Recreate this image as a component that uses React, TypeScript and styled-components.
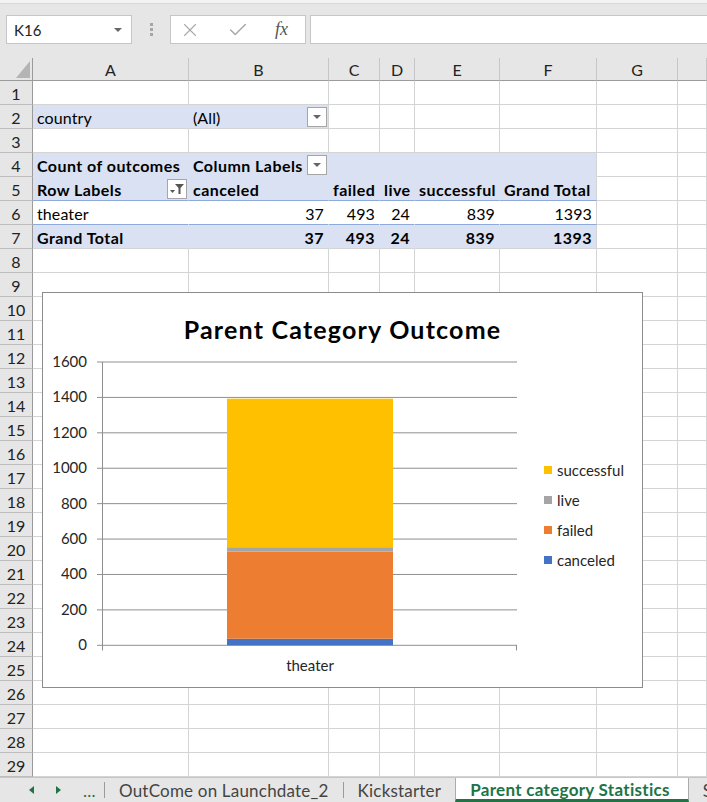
import React from 'react';
import styled, { createGlobalStyle } from 'styled-components';
import { X, Check } from 'lucide-react';

const FONT = `Lato, 'Liberation Sans', sans-serif`;

type Align = 'left' | 'right';
type Line = 'grid' | 'blue' | 'fill';
type Btn = 'drop' | 'filter';

type CellSpec = {
  text?: string;
  align?: Align;
  bold?: boolean;
  fill?: boolean;
  line?: Line;
  vline?: boolean;
  button?: Btn;
};

const columns = [
  { name: 'A', width: 156 },
  { name: 'B', width: 140 },
  { name: 'C', width: 51 },
  { name: 'D', width: 35 },
  { name: 'E', width: 85 },
  { name: 'F', width: 97 },
  { name: 'G', width: 81 },
  { name: 'H', width: 0 },
];

const ROWS = 29;

const lineColors: Record<Line, string> = {
  grid: '#d4d4d4',
  blue: '#8ea9db',
  fill: '#d9e1f2',
};

const values = ['37', '493', '24', '839', '1393'];
const headers = ['canceled', 'failed', 'live', 'successful', 'Grand Total'];

const pivot: Record<number, CellSpec[]> = {
  2: [
    { text: 'country', fill: true, vline: false },
    { text: '(All)', fill: true, button: 'drop' },
  ],
  4: [
    { text: 'Count of outcomes', bold: true, fill: true, line: 'fill', vline: false },
    { text: 'Column Labels', bold: true, fill: true, line: 'fill', vline: false, button: 'drop' },
    { fill: true, line: 'fill', vline: false },
    { fill: true, line: 'fill', vline: false },
    { fill: true, line: 'fill', vline: false },
    { fill: true, line: 'fill' },
  ],
  5: [
    { text: 'Row Labels', bold: true, fill: true, line: 'blue', vline: false, button: 'filter' },
    ...headers.map((h, i): CellSpec => ({ text: h, bold: true, fill: true, line: 'blue', vline: i === 4 })),
  ],
  6: [
    { text: 'theater', line: 'blue', vline: false },
    ...values.map((v, i): CellSpec => ({ text: v, align: 'right', line: 'blue', vline: i === 4 })),
  ],
  7: [
    { text: 'Grand Total', bold: true, fill: true, vline: false },
    ...values.map((v, i): CellSpec => ({ text: v, align: 'right', bold: true, fill: true, vline: i === 4 })),
  ],
};

const series = [
  { name: 'canceled', value: 37, color: '#4472c4' },
  { name: 'failed', value: 493, color: '#ed7d31' },
  { name: 'live', value: 24, color: '#a5a5a5' },
  { name: 'successful', value: 839, color: '#ffc000' },
];

const axisTicks = [0, 200, 400, 600, 800, 1000, 1200, 1400, 1600];
const yOf = (v: number) => 301.3 - (v * 283.3) / 1600;

const GlobalStyle = createGlobalStyle`
  html, body {
    margin: 0;
    padding: 0;
    background: #fff;
  }
  body {
    width: 707px;
    height: 802px;
    overflow: hidden;
    font-family: ${FONT};
  }
  * {
    box-sizing: border-box;
  }
`;

const Window = styled.div`
  display: flex;
  flex-direction: column;
  width: 707px;
  height: 802px;
  overflow: hidden;
`;

const TopStrip = styled.div`
  height: 4px;
  background: #f3f3f3;
  border-bottom: 1px solid #d8d8d8;
`;

const FormulaBar = styled.div`
  height: 54px;
  display: flex;
  align-items: flex-start;
  padding: 11px 0 0 6px;
  background: #e6e6e6;
`;

const NameBox = styled.div`
  width: 126px;
  height: 29px;
  display: flex;
  align-items: center;
  justify-content: space-between;
  padding: 0 9px 0 7px;
  background: #fff;
  border: 1px solid #c6c6c6;
  font-size: 15px;
  color: #222;
`;

const Caret = styled.span`
  width: 0;
  height: 0;
  border-left: 4px solid transparent;
  border-right: 4px solid transparent;
  border-top: 4px solid #666;
`;

const Grip = styled.div`
  width: 38px;
  height: 29px;
  display: flex;
  flex-direction: column;
  align-items: center;
  justify-content: center;
  gap: 2px;

  span {
    width: 3px;
    height: 3px;
    background: #a6a6a6;
  }
`;

const FxBox = styled.div`
  width: 136px;
  height: 29px;
  display: flex;
  align-items: center;
  gap: 26px;
  padding-left: 8px;
  background: #fff;
  border: 1px solid #c6c6c6;
  color: #a8a8a8;
`;

const FxLabel = styled.span`
  font-family: 'Liberation Serif', serif;
  font-style: italic;
  font-size: 18px;
  color: #555;
`;

const FormulaInput = styled.div`
  flex: 1;
  height: 29px;
  margin-left: 4px;
  background: #fff;
  border: 1px solid #c6c6c6;
  border-right: none;
`;

const Sheet = styled.div`
  position: relative;
  display: grid;
  grid-template-columns: 33px ${columns.map((c) => (c.width ? `${c.width}px` : '1fr')).join(' ')};
  grid-template-rows: 23px repeat(${ROWS}, 24px);
  overflow: hidden;
`;

const Corner = styled.div`
  position: relative;
  background: #e6e6e6;
  border-right: 1px solid #9b9b9b;
  border-bottom: 1px solid #9b9b9b;

  &::after {
    content: '';
    position: absolute;
    right: 2px;
    bottom: 2px;
    border-left: 14px solid transparent;
    border-bottom: 17px solid #b4b4b4;
  }
`;

const ColHead = styled.div`
  display: flex;
  align-items: center;
  justify-content: center;
  background: #e6e6e6;
  border-right: 1px solid #c6c6c6;
  border-bottom: 1px solid #9b9b9b;
  font-size: 16px;
  color: #222;
`;

const RowHead = styled.div`
  display: flex;
  align-items: center;
  justify-content: center;
  padding-top: 1px;
  background: #e6e6e6;
  border-right: 1px solid #9b9b9b;
  border-bottom: 1px solid #bdbdbd;
  font-size: 16px;
  color: #222;
`;

const Cell = styled.div<{ $fill?: boolean; $bold?: boolean; $align?: Align; $line?: Line; $vline?: boolean }>`
  display: flex;
  align-items: center;
  justify-content: ${({ $align }) => ($align === 'right' ? 'flex-end' : 'flex-start')};
  padding: 1px 4px 0;
  background: ${({ $fill }) => ($fill ? '#d9e1f2' : '#fff')};
  border-right: 1px solid
    ${({ $vline, $fill }) => ($vline === false ? ($fill ? '#d9e1f2' : '#fff') : '#d4d4d4')};
  border-bottom: 1px solid ${({ $line }) => lineColors[$line ?? 'grid']};
  font-size: 16px;
  font-weight: ${({ $bold }) => ($bold ? 700 : 400)};
  letter-spacing: ${({ $bold }) => ($bold ? '0.45px' : '0.1px')};
  color: #000;
  white-space: nowrap;
`;

const CellButton = styled.div`
  width: 20px;
  height: 20px;
  margin: 0 -3px 0 auto;
  display: flex;
  align-items: center;
  justify-content: center;
  background: #fff;
  border: 1px solid #a6a6a6;
`;

const Chart = styled.div`
  position: absolute;
  left: 42px;
  top: 234px;
  width: 601px;
  height: 396px;
  display: flex;
  flex-direction: column;
  background: #fff;
  border: 1px solid #8c8c8c;
  z-index: 2;
`;

const ChartTitle = styled.div`
  margin-top: 21px;
  text-align: center;
  font-size: 25px;
  line-height: 30px;
  font-weight: 700;
  letter-spacing: 1.2px;
  color: #000;
`;

const ChartBody = styled.div`
  display: flex;
`;

const Legend = styled.ul`
  list-style: none;
  margin: 0;
  padding: 111px 0 0 11px;
`;

const LegendItem = styled.li`
  display: flex;
  align-items: center;
  gap: 5px;
  line-height: 30px;
  font-size: 15px;
  color: #262626;
`;

const Swatch = styled.span<{ $color: string }>`
  width: 8px;
  height: 8px;
  background: ${({ $color }) => $color};
`;

const TabBar = styled.div`
  height: 25px;
  display: flex;
  align-items: stretch;
  background: #e6e6e6;
  border-top: 1px solid #c6c6c6;
  font-size: 17px;
  letter-spacing: 0.2px;
  color: #444;
  white-space: nowrap;

  & > * {
    flex-shrink: 0;
  }
`;

const TabNav = styled.div`
  width: 104px;
  display: flex;
  align-items: center;
  gap: 22px;
  padding-left: 29px;
  color: #217346;
`;

const NavArrow = styled.span<{ $dir: 'left' | 'right' }>`
  width: 0;
  height: 0;
  border-top: 4px solid transparent;
  border-bottom: 4px solid transparent;
  ${({ $dir }) => ($dir === 'left' ? 'border-right: 5px solid #217346;' : 'border-left: 5px solid #217346;')}
`;

const TabSep = styled.span`
  width: 1px;
  margin: 4px 0;
  background: #9b9b9b;
`;

const Tab = styled.div<{ $active?: boolean }>`
  display: flex;
  align-items: center;
  padding: 0 14px;
  ${({ $active }) =>
    $active
      ? `
    padding: 2px 18px 0 14px;
    background: #fff;
    color: #217346;
    font-weight: 700;
    letter-spacing: 0.3px;
    border-left: 1px solid #ababab;
    border-right: 1px solid #ababab;
    border-bottom: 3px solid #217346;
  `
      : ''}
`;

const DropIcon = () => (
  <svg width="8" height="5" viewBox="0 0 8 5">
    <polygon points="0,0 8,0 4,4" fill="#666" />
  </svg>
);

const FilterIcon = () => (
  <svg width="16" height="14" viewBox="0 0 16 14">
    <polygon points="1,8 6,8 3.5,11" fill="#555" />
    <polygon points="6,2 15,2 11.5,6 11.5,12 9.5,12 9.5,6" fill="#555" />
  </svg>
);

const renderCell = (row: number, col: number) => {
  const spec = pivot[row]?.[col] ?? {};
  return (
    <Cell
      key={`c${row}-${col}`}
      $fill={spec.fill}
      $bold={spec.bold}
      $align={spec.align}
      $line={spec.line}
      $vline={spec.vline}
    >
      {spec.text}
      {spec.button && <CellButton>{spec.button === 'drop' ? <DropIcon /> : <FilterIcon />}</CellButton>}
    </Cell>
  );
};

const OutcomeChart = () => {
  let base = 0;
  const segments = series.map((s) => {
    const seg = { ...s, top: yOf(base + s.value), bottom: yOf(base) };
    base += s.value;
    return seg;
  });

  return (
    <Chart>
      <ChartTitle>Parent Category Outcome</ChartTitle>
      <ChartBody>
        <svg width="490" height="340" viewBox="0 0 490 340">
          {axisTicks.map((t) => (
            <g key={t}>
              <line x1="54" x2="474" y1={yOf(t)} y2={yOf(t)} stroke="#8f8f8f" strokeWidth="1" />
              <text
                x="44"
                y={yOf(t) + 5}
                textAnchor="end"
                fontFamily={FONT}
                fontSize="15"
                fill="#262626"
              >
                {t}
              </text>
            </g>
          ))}
          <line x1="59.5" x2="59.5" y1="18" y2="306.5" stroke="#8f8f8f" strokeWidth="1" />
          <line x1="473.5" x2="473.5" y1="301" y2="306.5" stroke="#8f8f8f" strokeWidth="1" />
          {segments.map((s) => (
            <rect key={s.name} x="184" width="166" y={s.top} height={s.bottom - s.top} fill={s.color} />
          ))}
          <text x="267" y="327" textAnchor="middle" fontFamily={FONT} fontSize="15" fill="#262626">
            theater
          </text>
        </svg>
        <Legend>
          {[...series].reverse().map((s) => (
            <LegendItem key={s.name}>
              <Swatch $color={s.color} />
              {s.name}
            </LegendItem>
          ))}
        </Legend>
      </ChartBody>
    </Chart>
  );
};

export default function App() {
  const rows = Array.from({ length: ROWS }, (_, i) => i + 1);

  return (
    <Window>
      <GlobalStyle />
      <TopStrip />
      <FormulaBar>
        <NameBox>
          K16
          <Caret />
        </NameBox>
        <Grip>
          <span />
          <span />
          <span />
        </Grip>
        <FxBox>
          <X size={22} strokeWidth={1.2} />
          <Check size={22} strokeWidth={1.6} />
          <FxLabel>fx</FxLabel>
        </FxBox>
        <FormulaInput />
      </FormulaBar>
      <Sheet>
        <Corner />
        {columns.map((c) => (
          <ColHead key={c.name}>{c.name === 'H' ? '' : c.name}</ColHead>
        ))}
        {rows.map((r) => (
          <React.Fragment key={r}>
            <RowHead>{r}</RowHead>
            {columns.map((_, ci) => renderCell(r, ci))}
          </React.Fragment>
        ))}
        <OutcomeChart />
      </Sheet>
      <TabBar>
        <TabNav>
          <NavArrow $dir="left" />
          <NavArrow $dir="right" />
          <span>...</span>
        </TabNav>
        <TabSep />
        <Tab>OutCome on Launchdate_2</Tab>
        <TabSep />
        <Tab>Kickstarter</Tab>
        <Tab $active>Parent category Statistics</Tab>
        <Tab>Statistics</Tab>
      </TabBar>
    </Window>
  );
}
